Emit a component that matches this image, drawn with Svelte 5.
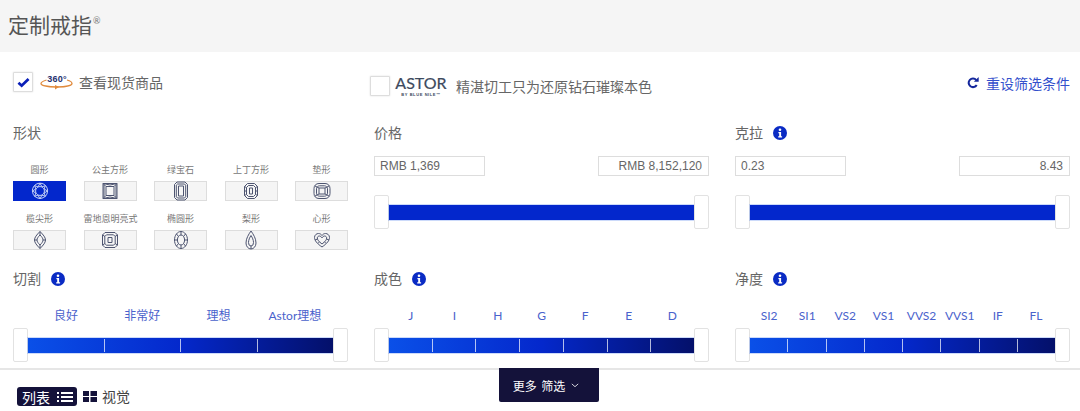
<script lang="ts">
	const shapes = [
		{ label: '圆形', active: true, d: 'M10 2.2a7.6 7.6 0 1 0 .01 0Z M10 5.6a4.4 4.4 0 1 0 .01 0Z M10 2.2 12 5.9 15.4 4.6 14.1 8 17.6 10 14.1 12 15.4 15.4 12 14.1 10 17.8 8 14.1 4.6 15.4 5.9 12 2.4 10 5.9 8 4.6 4.6 8 5.9Z' },
		{ label: '公主方形', d: 'M3 2.5h14v15H3Z M6 5.5h8v9H6Z M3 2.5 6 5.5 M17 2.5 14 5.5 M3 17.5 6 14.5 M17 17.5 14 14.5 M3 2.5 10 4 17 2.5 M3 17.5 10 16 17 17.5 M4 3.5v13 M16 3.5v13' },
		{ label: '绿宝石', d: 'M6 1h8l2.5 2.5v13L14 19H6l-2.500-2.500v-13Z M6.500 3h7l1.200 1.200v11.600L13.500 17h-7l-1.200-1.200V4.200Z M7.500 5h5v10h-5Z' },
		{ label: '上丁方形', d: 'M6.500 2.500h7l3 3v9l-3 3h-7l-3-3v-9Z M7.500 4.500h5l2 2v7l-2 2h-5l-2-2v-7Z M8.500 7h3v6h-3Z M3.500 5.500 5.500 6.500 M16.500 5.500 14.500 6.500 M3.500 14.500 5.500 13.500 M16.500 14.500 14.500 13.500 M3.500 10h2 M14.500 10h2' },
		{ label: '垫形', d: 'M7 2.500h6c3 0 5 2 5 5v5c0 3-2 5-5 5H7c-3 0-5-2-5-5v-5c0-3 2-5 5-5Z M7.500 4.800h5c1.500 0 3 1.500 3 3v4.400c0 1.500-1.500 3-3 3h-5c-1.500 0-3-1.500-3-3V7.800c0-1.500 1.500-3 3-3Z M7 7h6v6H7Z M3 5 7 7 M17 5 13 7 M3 15 7 13 M17 15 13 13' },
		{ label: '榄尖形', d: 'M10 1.500C13.500 5 15.500 7.500 15.500 10S13.500 15 10 18.500C6.500 15 4.500 12.500 4.500 10S6.500 5 10 1.500Z M10 5C12 7 13 8.500 13 10S12 13 10 15C8 13 7 11.500 7 10S8 7 10 5Z M10 1.500V5 M10 15v3.500 M4.500 10H7 M13 10h2.500' },
		{ label: '雷地恩明亮式', d: 'M5 2.500h10l2.500 2.500v10L15 17.500H5L2.500 15V5Z M6.500 4.800h7l1.700 1.700v7l-1.700 1.700h-7l-1.700-1.700v-7Z M8 7.500h4v5H8Z M2.500 5 5 6.500 M17.500 5 15 6.500 M2.500 15 5 13.500 M17.500 15 15 13.500' },
		{ label: '椭圆形', d: 'M10 1.500c3.600 0 6.500 3.800 6.500 8.500s-2.900 8.500-6.500 8.500S3.500 14.700 3.500 10 6.400 1.500 10 1.500Z M10 5c2 0 3.600 2.200 3.600 5S12 15 10 15s-3.600-2.200-3.600-5S8 5 10 5Z M10 1.500 10 5 M10 15v3.500 M3.500 10h2.900 M13.600 10h2.900 M5.500 4 7.500 6.500 M14.500 4 12.500 6.500 M5.500 16 7.500 13.500 M14.500 16 12.500 13.500' },
		{ label: '梨形', d: 'M10 1C12.500 4.500 15 8.500 15 13a5 6 0 0 1-10 0C5 8.500 7.500 4.500 10 1Z M10 5.500C11.300 7.500 12.500 10 12.500 12.500a2.500 3.500 0 0 1-5 0C7.500 10 8.700 7.500 10 5.500Z M10 16v3' },
		{ label: '心形', d: 'M10 17C5 13.500 2.500 10.500 2.500 7.500 2.500 5 4.500 3.500 6.500 3.500 8 3.500 9.300 4.300 10 5.500 10.700 4.300 12 3.500 13.500 3.500 15.500 3.500 17.500 5 17.500 7.500 17.500 10.500 15 13.500 10 17Z M10 14C7 11.800 5.300 9.800 5.300 8 5.300 6.800 6.300 6 7.300 6 8.500 6 9.500 6.800 10 8 10.500 6.800 11.500 6 12.700 6 13.700 6 14.700 6.800 14.700 8 14.700 9.800 13 11.800 10 14Z M3 10 5.500 9 M17 10 14.500 9 M6 13.500 7.500 11.800 M14 13.500 12.500 11.800' }
	];

	const scales = [
		{ title: '切割', labels: ['良好', '非常好', '理想', 'Astor理想'] },
		{ title: '成色', labels: ['J', 'I', 'H', 'G', 'F', 'E', 'D'] },
		{ title: '净度', labels: ['SI2', 'SI1', 'VS2', 'VS1', 'VVS2', 'VVS1', 'IF', 'FL'] }
	];
</script>

{#snippet info()}
	<svg class="info" viewBox="0 0 14 14" aria-hidden="true">
		<circle cx="7" cy="7" r="7" fill="#0a2bc4" />
		<circle cx="7" cy="3.700" r="1.300" fill="#fff" />
		<path d="M5.400 6h2.700v4.200h1v1.300H5.200v-1.300h1V7.300h-.8Z" fill="#fff" />
	</svg>
{/snippet}

{#snippet slider(stops: number)}
	<div class="slider">
		<div class="handle"></div>
		<div class="track" class:plain={stops === 0}>
			{#each Array(stops) as _, i}
				<div class="seg" class:first={i === 0}></div>
			{/each}
		</div>
		<div class="handle"></div>
	</div>
{/snippet}

<div class="page">
	<header class="title-bar">
		<h1>定制戒指<sup>®</sup></h1>
	</header>

	<div class="top-row">
		<label class="opt stock">
			<span class="check">
				<svg viewBox="0 0 14 12" width="13" height="11" aria-hidden="true">
					<path d="M1.500 6.200 5 9.500 12.500 2.200" fill="none" stroke="#0a1fb8" stroke-width="3" />
				</svg>
			</span>
			<svg class="spin" viewBox="0 0 33 22" width="33" height="22" aria-hidden="true">
				<text x="17" y="11">360°</text>
				<path d="M6.500 9C3 10 1 11 1 12.500c0 2 7 3.500 16 3.500s15-1.500 15-3.500c0-1.500-1.500-2.500-5-3.500" fill="none" stroke="#e08a3c" stroke-width="1.300" />
				<path d="M15 14l4 2-4 2.500Z" fill="#e08a3c" />
			</svg>
			<span>查看现货商品</span>
		</label>

		<label class="opt astor">
			<span class="check empty"></span>
			<span class="logo">
				<span class="logo-name">ASTOR</span>
				<span class="logo-sub">BY BLUE NILE™</span>
			</span>
			<span>精湛切工只为还原钻石璀璨本色</span>
		</label>

		<a class="reset" href="#reset">
			<svg viewBox="0 0 14 14" width="12" height="12" aria-hidden="true">
				<path d="M11.300 9.200A5 5 0 1 1 10.800 3.600" fill="none" stroke="#14279c" stroke-width="2.400" />
				<path d="M8 5.600h5.600V0Z" fill="#14279c" />
			</svg>
			<span>重设筛选条件</span>
		</a>
	</div>

	<div class="filters">
		<section class="block">
			<div class="label">形状</div>
			<div class="shapes">
				{#each shapes as s}
					<div class="shape">
						<div class="shape-name">{s.label}</div>
						<div class="shape-box" class:active={s.active}>
							<svg viewBox="0 0 20 20" width="20" height="20" aria-hidden="true"><path d={s.d} /></svg>
						</div>
					</div>
				{/each}
			</div>
		</section>

		<section class="block">
			<div class="label">价格</div>
			<div class="inputs">
				<div class="field">RMB 1,369</div>
				<div class="field right">RMB 8,152,120</div>
			</div>
			{@render slider(0)}
		</section>

		<section class="block">
			<div class="label">克拉{@render info()}</div>
			<div class="inputs">
				<div class="field">0.23</div>
				<div class="field right">8.43</div>
			</div>
			{@render slider(0)}
		</section>

		{#each scales as scale}
			<section class="block lower">
				<div class="label">{scale.title}{@render info()}</div>
				<div class="ticks">
					{#each scale.labels as t}
						<span>{t}</span>
					{/each}
				</div>
				{@render slider(scale.labels.length)}
			</section>
		{/each}
	</div>

	<footer class="bottom">
		<div class="views">
			<span class="view-on">
				列表
				<svg viewBox="0 0 16 12" width="16" height="12" aria-hidden="true">
					<path d="M0 1h2v2H0Z M0 5h2v2H0Z M0 9h2v2H0Z M4 1h12v2H4Z M4 5h12v2H4Z M4 9h12v2H4Z" fill="#fff" />
				</svg>
			</span>
			<svg class="grid-icon" viewBox="0 0 14 11" width="14" height="11" aria-hidden="true">
				<path d="M0 0h6v5H0Z M7.500 0H14v5H7.500Z M0 6h6v5H0Z M7.500 6H14v5H7.500Z" fill="#14123a" />
			</svg>
			<span class="view-off">视觉</span>
		</div>
		<button class="more">
			<span>更多 筛选</span>
			<svg viewBox="0 0 10 6" width="8" height="5" aria-hidden="true">
				<path d="M1 1l4 3.500L9 1" fill="none" stroke="#fff" stroke-width="1" />
			</svg>
		</button>
	</footer>
</div>

<style>
	:global(body) {
		margin: 0;
		background: #fff;
	}

	.page {
		width: 1080px;
		height: 411px;
		overflow: hidden;
		font-family: Lato, "Noto Sans CJK SC", sans-serif;
		color: #666;
	}

	.title-bar {
		height: 52px;
		box-sizing: border-box;
		background: #f5f5f5;
		padding: 0 0 3px 8px;
		display: flex;
		align-items: center;
	}

	h1 {
		margin: 0;
		font-size: 21px;
		font-weight: 400;
		color: #555;
		line-height: 1;
	}

	sup {
		font-size: 9px;
		vertical-align: 9px;
		line-height: 0;
		margin-left: 1px;
		color: #777;
	}

	.top-row {
		height: 70px;
		display: flex;
		align-items: center;
		font-size: 14px;
		padding: 0 10px 0 13px;
	}

	.opt {
		display: flex;
		align-items: center;
	}

	.stock {
		width: 357px;
		margin-top: -10px;
	}

	.astor {
		margin-top: -2px;
	}

	.check {
		width: 20px;
		height: 20px;
		box-sizing: border-box;
		border: 1px solid #ddd;
		box-shadow: 0 0 2px #ddd;
		display: flex;
		align-items: center;
		justify-content: center;
		background: #fff;
		border-radius: 1px;
	}

	.spin {
		margin: 0 6px 0 7px;
	}

	.spin text {
		font: 700 9px "Liberation Sans", sans-serif;
		letter-spacing: 0.2px;
		text-anchor: middle;
		fill: #23306e;
	}

	.logo {
		display: flex;
		flex-direction: column;
		align-items: center;
		width: 52px;
		margin: 0 9px 0 5px;
	}

	.logo-name {
		font: 400 16px/15px Lato, sans-serif;
		-webkit-text-stroke: 0.2px #3d4a5e;
		color: #3d4a5e;
	}

	.logo-sub {
		font: 700 4px/6px "Liberation Sans", sans-serif;
		letter-spacing: 0.6px;
		color: #3d4a5e;
		margin-top: 2px;
	}

	.reset {
		margin-left: auto;
		margin-top: -8px;
		display: flex;
		align-items: center;
		gap: 7px;
		color: #3350cc;
		text-decoration: none;
	}

	.filters {
		display: grid;
		grid-template-columns: repeat(3, 335px);
		column-gap: 26px;
		padding-left: 13px;
	}

	.block {
		height: 146px;
	}

	.block.lower {
		height: 100px;
	}

	.label {
		height: 22px;
		box-sizing: border-box;
		padding-bottom: 2px;
		display: flex;
		align-items: center;
		gap: 10px;
		font-size: 14px;
		color: #666;
	}

	.info {
		width: 14px;
		height: 14px;
		margin-top: 2px;
	}

	.shapes {
		display: grid;
		grid-template-columns: repeat(5, 53px);
		column-gap: 17.500px;
		row-gap: 11px;
		padding-top: 19px;
	}

	.shape-name {
		height: 14px;
		margin-bottom: 4px;
		font-size: 9px;
		line-height: 14px;
		color: #777;
		text-align: center;
		white-space: nowrap;
	}

	.shape-box {
		height: 20px;
		box-sizing: border-box;
		background: #f5f5f5;
		border: 1px solid #ddd;
		display: flex;
		align-items: center;
		justify-content: center;
	}

	.shape-box svg {
		flex: none;
		fill: none;
		stroke: #4d5470;
		stroke-width: 1;
	}

	.shape-box.active {
		background: #0327cc;
		border-color: #0327cc;
	}

	.shape-box.active svg {
		stroke: #c6d2f6;
	}

	.inputs {
		display: flex;
		justify-content: space-between;
		padding-top: 12px;
		margin-bottom: 19px;
	}

	.field {
		width: 111px;
		height: 20px;
		box-sizing: border-box;
		border: 1px solid #ddd;
		padding: 0 6px 0 5px;
		font: 12px/18px "Liberation Sans", sans-serif;
		color: #666;
	}

	.field.right {
		text-align: right;
	}

	.slider {
		display: flex;
		align-items: center;
		height: 34px;
	}

	.handle {
		flex: none;
		width: 15px;
		height: 34px;
		box-sizing: border-box;
		background: #fff;
		border: 1px solid #e2e2e2;
		border-radius: 2px;
	}

	.track {
		flex: 1;
		height: 15px;
		display: flex;
		align-items: center;
		background: linear-gradient(90deg, #0a50e8, #0428cc 50%, #04106a);
		box-shadow: 0 0 0 1px rgba(110, 150, 240, 0.35);
	}

	.track.plain {
		background: #0327cc;
	}

	.seg {
		flex: 1;
		height: 13px;
		border-left: 1px solid rgba(255, 255, 255, 0.7);
	}

	.seg.first {
		border-left: 0;
	}

	.ticks {
		display: flex;
		height: 20px;
		margin: 16px 15px 2px;
		font-size: 12px;
		line-height: 20px;
		color: #4a62cc;
	}

	.ticks span {
		flex: 1;
		text-align: center;
		white-space: nowrap;
	}

	.bottom {
		display: flex;
		height: 43px;
		box-sizing: border-box;
		border-top: 2px solid #e6e6e6;
	}

	.views {
		width: 499px;
		flex: none;
		box-sizing: border-box;
		padding: 17px 0 0 17px;
		display: flex;
		align-items: flex-start;
	}

	.view-on {
		width: 60px;
		height: 19px;
		box-sizing: border-box;
		padding-left: 5px;
		display: flex;
		align-items: center;
		gap: 7px;
		background: #14123a;
		border-radius: 3px;
		color: #fff;
		font-size: 14px;
	}

	.grid-icon {
		margin: 4px 5px 0 6px;
	}

	.view-off {
		font-size: 14px;
		line-height: 19px;
		color: #444;
	}

	.more {
		width: 100px;
		height: 34px;
		margin-top: -2px;
		border: 0;
		border-radius: 0 0 2px 2px;
		background: #14123a;
		color: #fff;
		font: 12px Lato, "Noto Sans CJK SC", sans-serif;
		word-spacing: 1.500px;
		display: flex;
		align-items: center;
		justify-content: center;
		gap: 6px;
		padding: 0 6px 0 0;
	}
</style>
